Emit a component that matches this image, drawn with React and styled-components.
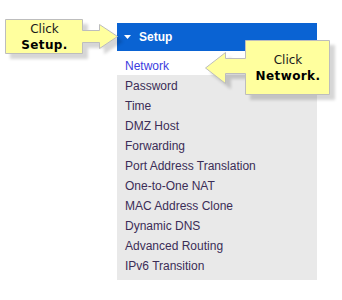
import styled, { createGlobalStyle } from 'styled-components';

const GlobalStyle = createGlobalStyle`
    body {
        margin: 0;
        background: #ffffff;
        font-family: "Liberation Sans", Arial, sans-serif;
    }
`;

const Page = styled.div`
    position: relative;
    width: 342px;
    height: 300px;
    background: #ffffff;
    padding: 23px 0 0 117px;
    box-sizing: border-box;
`;

const Menu = styled.div`
    width: 200px;
    display: flex;
    flex-direction: column;
`;

const MenuHeader = styled.div`
    height: 28px;
    display: flex;
    align-items: center;
    gap: 8px;
    padding-left: 7px;
    background: #0a63d3;
    color: #ffffff;
    font-size: 12px;
    font-weight: bold;
`;

const MenuList = styled.ul`
    list-style: none;
    margin: 0;
    padding: 0 0 5px;
    background: #e9e9e9;
`;

const MenuItem = styled.li`
    padding: ${(p) => (p.$active ? '6px' : '2px')} 0 0 8px;
    line-height: 18px;
    font-size: 12px;
    color: ${(p) => (p.$active ? '#3c3ce0' : '#3b2d57')};
    background: ${(p) => (p.$active ? '#ffffff' : 'transparent')};
`;

const Overlay = styled.svg`
    position: absolute;
    left: 0;
    top: 0;
    width: 342px;
    height: 300px;
    pointer-events: none;
    filter: drop-shadow(5px 5px 1.5px rgba(0, 0, 0, 0.16));
`;

const CalloutLabel = styled.div`
    position: absolute;
    left: ${(p) => p.$x}px;
    top: ${(p) => p.$y}px;
    width: ${(p) => p.$w}px;
    height: ${(p) => p.$h}px;
    display: flex;
    flex-direction: column;
    align-items: center;
    justify-content: center;
    font-family: "DejaVu Sans", Verdana, sans-serif;
    font-size: 12px;
    line-height: 16px;
    color: #1a1a1a;

    b {
        color: #000000;
        letter-spacing: 0.4px;
    }
`;

const Caret = () => (
    <svg width="7" height="4" viewBox="0 0 7 4">
        <path d="M0 0 H7 L3.5 4 Z" fill="#ffffff" />
    </svg>
);

const items = [
    'Network',
    'Password',
    'Time',
    'DMZ Host',
    'Forwarding',
    'Port Address Translation',
    'One-to-One NAT',
    'MAC Address Clone',
    'Dynamic DNS',
    'Advanced Routing',
    'IPv6 Transition',
];

const App = () => {
    return (
        <>
            <GlobalStyle />
            <Page>
                <Menu>
                    <MenuHeader>
                        <Caret />
                        Setup
                    </MenuHeader>
                    <MenuList>
                        {items.map((item, idx) => (
                            <MenuItem key={item} $active={idx === 0}>
                                {item}
                            </MenuItem>
                        ))}
                    </MenuList>
                </Menu>

                <Overlay viewBox="0 0 342 300">
                    <path
                        d="M5.5 19.5 H82.5 V30.5 H99.5 V24.5 L117.5 36.5 L99.5 48.5 V42.5 H82.5 V53.5 H5.5 Z"
                        fill="#ffff9e"
                        stroke="#bdbdbd"
                    />
                    <path
                        d="M245.5 40.5 H329.5 V94.5 H245.5 V73.5 H225.5 V83.5 L205.5 68 L225.5 52.5 V58.5 H245.5 Z"
                        fill="#ffff9e"
                        stroke="#bdbdbd"
                    />
                </Overlay>
                <CalloutLabel $x={6} $y={20} $w={77} $h={34}>
                    <span>Click</span>
                    <b>Setup.</b>
                </CalloutLabel>
                <CalloutLabel $x={246} $y={41} $w={84} $h={54}>
                    <span>Click</span>
                    <b>Network.</b>
                </CalloutLabel>
            </Page>
        </>
    );
};

export default App;
